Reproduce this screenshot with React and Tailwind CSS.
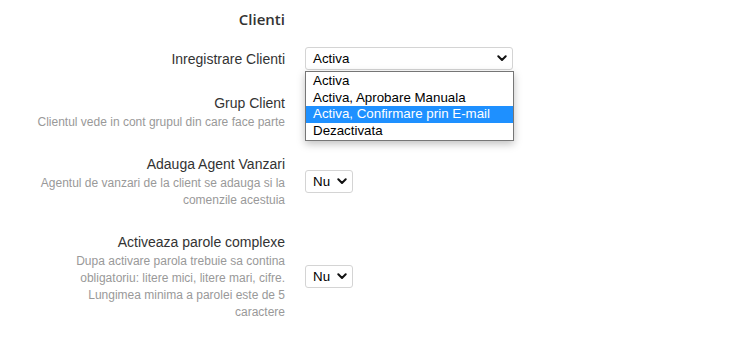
import React from "react";

function Chevron() {
  return (
    <svg width="10" height="7" viewBox="0 0 10 7" className="shrink-0">
      <path d="M1.3 1.3 L5 5 L8.7 1.3" fill="none" stroke="#111" strokeWidth="2" strokeLinecap="round" strokeLinejoin="round" />
    </svg>
  );
}

function FakeSelect({ value, width, children }) {
  return (
    <div
      className="relative flex h-[23px] items-center justify-between rounded-[3px] border border-[#d4d4d4] bg-white pl-[7px] pr-[5px] text-[13.33px] text-black"
      style={{ width }}
    >
      <span className="leading-none">{value}</span>
      <Chevron />
      {children}
    </div>
  );
}

function Row({ label, desc, children }) {
  return (
    <div className="flex items-center gap-[20px]">
      <div className="ml-[35px] w-[250px] text-right">
        <div className="text-[14px] leading-[20px] text-[#333]">{label}</div>
        {desc && (
          <div className="mt-px text-[12px] leading-[17px] text-[#999]">{desc}</div>
        )}
      </div>
      <div className="flex items-center">{children}</div>
    </div>
  );
}

export default function App() {
  const options = [
    "Activa",
    "Activa, Aprobare Manuala",
    "Activa, Confirmare prin E-mail",
    "Dezactivata",
  ];
  return (
    <div className="h-[340px] w-[753px] bg-white font-['Liberation_Sans',Arial,sans-serif]">
      <div className="pt-[8px]">
        <div className="ml-[35px] w-[250px] text-right font-['Open_Sans',sans-serif] text-[15px] font-semibold leading-[22px] text-[#333]">
          Clienti
        </div>
        <div className="mt-[17px] flex flex-col gap-[23px]">
          <Row label="Inregistrare Clienti">
            <FakeSelect value="Activa" width={208}>
              <div className="absolute left-[-1px] top-[23px] z-10 w-[209px] border border-[#767676] bg-white py-px shadow-[0_3px_8px_rgba(0,0,0,0.25)]">
                {options.map((o, i) => (
                  <div
                    key={o}
                    className={
                      "h-[16.5px] pl-[7px] text-[13.33px] leading-[16.5px] " +
                      (i === 2 ? "bg-[#1e90ff] text-white" : "text-black")
                    }
                  >
                    {o}
                  </div>
                ))}
              </div>
            </FakeSelect>
          </Row>
          <Row label="Grup Client" desc="Clientul vede in cont grupul din care face parte">
            <FakeSelect value="" width={120} />
          </Row>
          <Row
            label="Adauga Agent Vanzari"
            desc="Agentul de vanzari de la client se adauga si la comenzile acestuia"
          >
            <FakeSelect value="Nu" width={48} />
          </Row>
          <Row
            label="Activeaza parole complexe"
            desc="Dupa activare parola trebuie sa contina obligatoriu: litere mici, litere mari, cifre. Lungimea minima a parolei este de 5 caractere"
          >
            <FakeSelect value="Nu" width={48} />
          </Row>
        </div>
      </div>
    </div>
  );
}
